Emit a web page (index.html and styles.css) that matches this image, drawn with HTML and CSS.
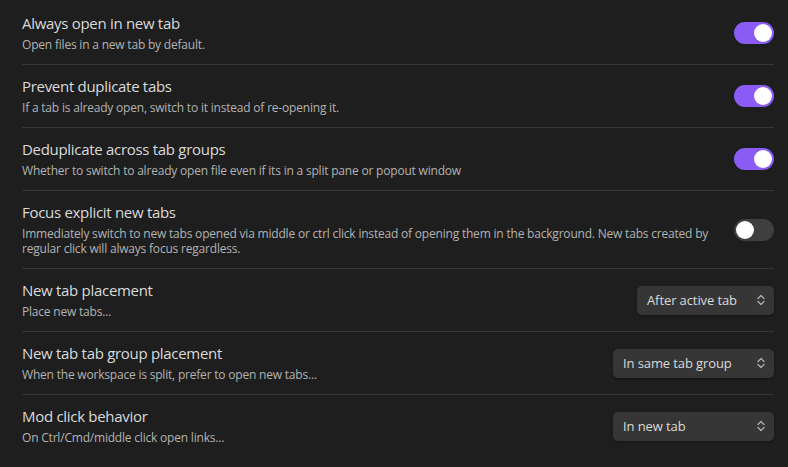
FILE: index.html
```html
<!DOCTYPE html>
<html>
<head>
<meta charset="utf-8">
<link rel="stylesheet" href="styles.css">
</head>
<body>
<div class="settings">
  <div class="item">
    <div class="info">
      <div class="name">Always open in new tab</div>
      <div class="desc">Open files in a new tab by default.</div>
    </div>
    <div class="control"><div class="toggle on"><span class="knob"></span></div></div>
  </div>
  <div class="item">
    <div class="info">
      <div class="name">Prevent duplicate tabs</div>
      <div class="desc">If a tab is already open, switch to it instead of re-opening it.</div>
    </div>
    <div class="control"><div class="toggle on"><span class="knob"></span></div></div>
  </div>
  <div class="item">
    <div class="info">
      <div class="name">Deduplicate across tab groups</div>
      <div class="desc">Whether to switch to already open file even if its in a split pane or popout window</div>
    </div>
    <div class="control"><div class="toggle on"><span class="knob"></span></div></div>
  </div>
  <div class="item">
    <div class="info">
      <div class="name">Focus explicit new tabs</div>
      <div class="desc">Immediately switch to new tabs opened via middle or ctrl click instead of opening them in the background. New tabs created by regular click will always focus regardless.</div>
    </div>
    <div class="control"><div class="toggle"><span class="knob"></span></div></div>
  </div>
  <div class="item">
    <div class="info">
      <div class="name">New tab placement</div>
      <div class="desc">Place new tabs...</div>
    </div>
    <div class="control">
      <div class="dropdown w-small"><span>After active tab</span>
        <svg class="chev" viewBox="0 0 8 12" width="8" height="12"><path d="M1 4.5 L4 1.5 L7 4.5 M1 7.5 L4 10.5 L7 7.5" fill="none" stroke="currentColor" stroke-width="1.2" stroke-linecap="round" stroke-linejoin="round"/></svg>
      </div>
    </div>
  </div>
  <div class="item">
    <div class="info">
      <div class="name">New tab tab group placement</div>
      <div class="desc">When the workspace is split, prefer to open new tabs...</div>
    </div>
    <div class="control">
      <div class="dropdown w-large"><span>In same tab group</span>
        <svg class="chev" viewBox="0 0 8 12" width="8" height="12"><path d="M1 4.5 L4 1.5 L7 4.5 M1 7.5 L4 10.5 L7 7.5" fill="none" stroke="currentColor" stroke-width="1.2" stroke-linecap="round" stroke-linejoin="round"/></svg>
      </div>
    </div>
  </div>
  <div class="item">
    <div class="info">
      <div class="name">Mod click behavior</div>
      <div class="desc">On Ctrl/Cmd/middle click open links...</div>
    </div>
    <div class="control">
      <div class="dropdown w-large"><span>In new tab</span>
        <svg class="chev" viewBox="0 0 8 12" width="8" height="12"><path d="M1 4.5 L4 1.5 L7 4.5 M1 7.5 L4 10.5 L7 7.5" fill="none" stroke="currentColor" stroke-width="1.2" stroke-linecap="round" stroke-linejoin="round"/></svg>
      </div>
    </div>
  </div>
</div>
</body>
</html>
```
FILE: styles.css
```css
html, body {
  margin: 0;
  padding: 0;
  background: #1e1e1e;
}
body {
  font-family: "Open Sans", "Noto Sans", sans-serif;
  color: #dadada;
}
.settings {
  width: 752px;
  margin-left: 22px;
  padding-top: 1px;
}
.item {
  display: flex;
  align-items: center;
  padding: 12px 0;
  border-top: 1px solid #363636;
}
.item:first-child {
  border-top: none;
  padding-top: 13px;
}
.info {
  flex: 1;
  min-width: 0;
  margin-right: 20px;
}
.name {
  font-size: 15px;
  line-height: 19px;
  letter-spacing: -0.3px;
  color: #dadada;
}
.desc {
  font-size: 12px;
  line-height: 15px;
  letter-spacing: -0.2px;
  padding-top: 4px;
  color: #b3b3b3;
}
.control {
  flex: none;
  display: flex;
  justify-content: flex-end;
}
.toggle {
  position: relative;
  width: 40px;
  height: 22px;
  border-radius: 11px;
  background: #3f3f3f;
}
.toggle.on {
  background: #8a5cf5;
}
.knob {
  position: absolute;
  top: 2px;
  left: 2px;
  width: 18px;
  height: 18px;
  border-radius: 50%;
  background: #ffffff;
}
.toggle.on .knob {
  left: 20px;
}
.dropdown {
  box-sizing: border-box;
  height: 29px;
  display: flex;
  align-items: center;
  justify-content: space-between;
  padding: 0 9px 0 10px;
  background: #363636;
  border-radius: 5px;
  box-shadow: 0 1px 2px rgba(0,0,0,0.35);
  font-size: 13px;
  letter-spacing: -0.1px;
  color: #dadada;
}
.w-small { width: 137px; }
.w-large { width: 161px; }
.chev {
  color: #b3b3b3;
  display: block;
}
```
